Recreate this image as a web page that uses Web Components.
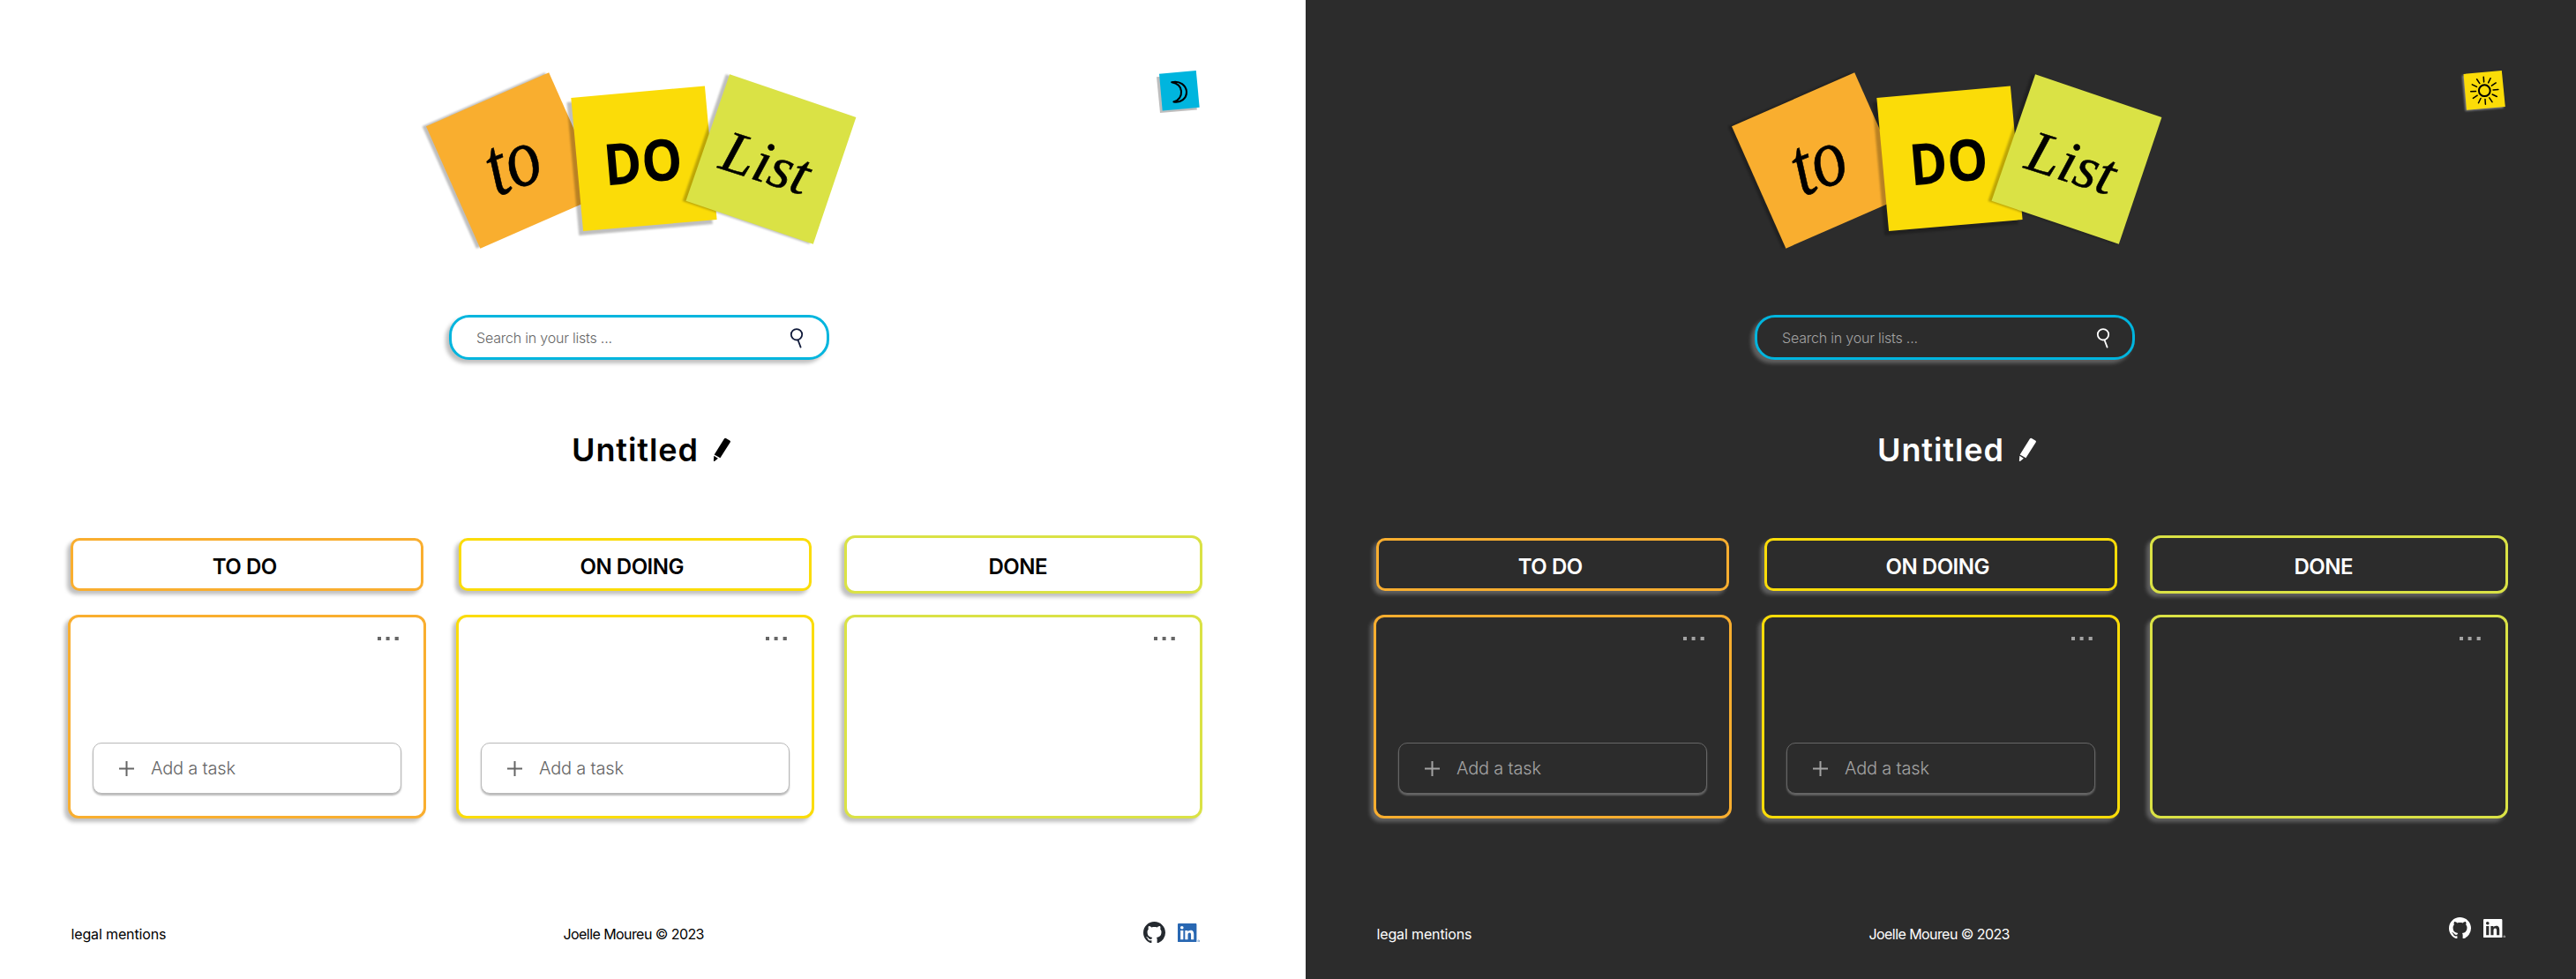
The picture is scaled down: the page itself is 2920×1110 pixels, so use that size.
<!DOCTYPE html>
<html lang="en">
<head>
<meta charset="utf-8">
<title>To Do List</title>
<style>
  html, body { margin: 0; }
  body { display: flex; width: 2920px; height: 1110px; overflow: hidden; font-family: Inter, "Open Sans", sans-serif; }
</style>
</head>
<body>
<todo-page theme="light"></todo-page>
<todo-page theme="dark"></todo-page>

<script>
class Base extends HTMLElement {
  constructor() {
    super();
    this.attachShadow({ mode: 'open' });
  }
  connectedCallback() {
    if (!this.shadowRoot.childNodes.length) this.shadowRoot.innerHTML = this.view();
  }
}

/* One line of text spaced out to an exact width. */
class FitText extends Base {
  view() { return `<style>:host{display:inline-block;white-space:nowrap;line-height:1}</style><slot></slot>`; }
  connectedCallback() {
    super.connectedCallback();
    const target = parseFloat(this.getAttribute('width'));
    const n = this.textContent.length;
    this.style.letterSpacing = '0px';
    const natural = this.getBoundingClientRect().width;
    const gap = (target - natural) / (n - 1);
    this.style.letterSpacing = gap.toFixed(3) + 'px';
    this.style.marginRight = (-gap).toFixed(3) + 'px';
  }
}

class TodoLogo extends Base {
  view() {
    return `<style>
      :host{display:block;width:540px;height:240px}
      svg{display:block}
      .shade{fill:#000;opacity:.25;filter:blur(.8px)}
      .script{font-family:"Liberation Serif",serif;font-style:italic}
      .bold{font-family:"Open Sans",sans-serif;font-weight:700}
    </style>
    <svg width="540" height="240" viewBox="0 0 540 240">
      <polygon class="shade" points="18.6,83.3 157.8,22.3 219.2,160.7 80,221.7"/>
      <polygon fill="#f9ae2f" points="23,83.3 162.2,22.3 223.6,160.7 84.4,221.7"/>
      <polygon class="shade" points="182.5,56 334.1,42.5 347.8,194 196.3,207"/>
      <polygon fill="#fbdc08" points="187.3,51 338.9,37.5 352.6,189 201.1,202"/>
      <polygon class="shade" points="362.7,24.3 506,73 457.4,216.7 313.6,167.9"/>
      <polygon fill="#dae245" points="367.1,24.3 510.4,73 461.8,216.7 317.5,167.7"/>
      <text class="script" font-size="94" stroke="#000" stroke-width=".6" textLength="61" lengthAdjust="spacingAndGlyphs" transform="translate(103 163) rotate(-21)">to</text>
      <text class="bold" font-size="65" textLength="89" lengthAdjust="spacingAndGlyphs" transform="translate(226.5 150.5) rotate(-5)">DO</text>
      <text class="script" font-size="67" stroke="#000" stroke-width=".5" textLength="102" lengthAdjust="spacingAndGlyphs" transform="translate(353 130) rotate(18)">List</text>
    </svg>`;
  }
}

class ThemeToggle extends Base {
  view() {
    const dark = this.getAttribute('theme') === 'dark';
    const rays = Array.from({ length: 12 }, (_, i) =>
      `<line x1="9.8" x2="15.6" transform="rotate(${i * 30 - 4})"/>`).join('');
    return `<style>:host{display:block}svg{display:block}.b{filter:blur(1px)}</style>
    <svg width="80" height="70" viewBox="0 0 80 70">${dark ? `
      <polygon class="b" fill="#fff" opacity=".4" points="10.8,15.5 54,12 57.8,52.5 14.6,56"/>
      <polygon fill="#fbdc08" points="12.5,14 55.8,10 59.8,51 16,54.8"/>
      <g transform="translate(36.3 32.7)" fill="none" stroke="#000" stroke-width="1.5" stroke-linecap="round">
        <circle r="6.4" stroke-width="2"/>${rays}</g>` : `
      <polygon class="b" style="filter:blur(.7px)" opacity=".25" points="11,17.2 53,13.5 56.9,54.5 15,58"/>
      <polygon fill="#00b5de" points="14,13.7 55.8,10 59.7,51.7 17.7,55.5"/>
      <path d="M28.2 23.2C37.5 21 44.5 27 45 34C45.2 41.5 38.5 47 30.4 45.4C36 43.8 39.5 39.3 39 33.4C38.6 28 34.3 24.3 28.2 23.2Z" fill="none" stroke="#000" stroke-width="2.1" stroke-linejoin="round"/>`}
    </svg>`;
  }
}

class SearchBar extends Base {
  view() {
    return `<style>
      :host{display:flex;align-items:center;justify-content:space-between;box-sizing:border-box;width:431px;height:51px;
        border:3px solid #00b5de;border-radius:23px;padding:1px 24px 0 28px;
        background:var(--bg);box-shadow:-4px 4px 4px var(--shadow);color:var(--muted);font-size:16px;font-weight:300}
      svg{display:block;color:var(--lens);margin-left:auto;margin-right:var(--lens-gap)}
    </style>
    <fit-text width="154">Search in your lists ...</fit-text>
    <svg width="18" height="26" viewBox="0 0 18 26" fill="none" stroke="currentColor" stroke-width="1.8" stroke-linecap="round">
      <circle cx="8" cy="9.3" r="6.2"/><path d="M9.7 16L12.6 23.6"/>
    </svg>`;
  }
}

class ListTitle extends Base {
  view() {
    return `<style>
      :host{display:flex;align-items:flex-start;color:var(--ink);font-size:36px;font-weight:600}
      svg{display:block;margin:2px 0 0 14px}
    </style>
    <fit-text width="143">${this.textContent}</fit-text>
    <svg width="26" height="32" viewBox="0 0 26 32" fill="currentColor">
      <path d="M15.9 3.5Q16.7 2.2 18 2.9L22.2 5.4Q23.4 6.2 22.7 7.4L11.4 25.3L4.7 21.4Z"/>
      <path d="M4.3 22.7L8.9 25.7L4.9 28.9Q3.8 29.4 3.9 28.2Z"/>
    </svg>`;
  }
}

class AddTask extends Base {
  view() {
    return `<style>
      :host{display:flex;align-items:center;box-sizing:border-box;width:350px;height:58px;border:1px solid var(--line);
        border-radius:10px;padding:0 29px;background:var(--bg);box-shadow:0 2px 2px var(--shadow2);color:var(--muted);font-size:20px;font-weight:300}
      svg{display:block;margin-right:19px}
    </style>
    <svg width="17" height="17" viewBox="0 0 17 17" stroke="currentColor" stroke-width="2"><path d="M8.5 0V17M0 8.5H17"/></svg>
    <fit-text width="96">Add a task</fit-text>`;
  }
}

class TaskColumn extends Base {
  view() {
    const open = this.hasAttribute('adding');
    return `<style>
      :host{display:flex;flex-direction:column;width:406px;gap:24px}
      .head,.card{box-sizing:border-box;border:3px solid var(--accent);background:var(--bg);box-shadow:-4px 4px 4px var(--shadow)}
      .head{display:flex;align-items:center;justify-content:center;height:66px;border-radius:12px;
        padding:6px var(--nudge) 0 0;color:var(--ink);font-size:24px;font-weight:600}
      :host([inset]) .head{height:60px;margin:3px;border-radius:10px}
      .card{display:flex;flex-direction:column;justify-content:space-between;height:231px;border-radius:12px;padding:22px 25px 25px}
      .dots{display:block;margin-left:auto;margin-right:3px;color:var(--muted)}
    </style>
    <div class="head"><fit-text width="${this.getAttribute('text-width')}">${this.getAttribute('name')}</fit-text></div>
    <div class="card">
      <svg class="dots" width="24" height="4" viewBox="0 0 24 4" fill="currentColor"><path d="M0 0h4v4H0zM9.6 0h4v4h-4zM19.6 0h4.2v4h-4.2z"/></svg>
      ${open ? '<add-task></add-task>' : ''}
    </div>`;
  }
}

class PageFooter extends Base {
  view() {
    return `<style>
      :host{display:flex;align-items:flex-start;color:var(--ink);font-size:16px;font-weight:400}
      .mid{margin-left:450px}
      .icons{display:flex;gap:13.5px;margin-left:498px;margin-top:var(--icon-top)}
      svg{display:block}
      .in{margin-top:2px}
    </style>
    <fit-text width="108">legal mentions</fit-text>
    <fit-text class="mid" width="160">Joelle Moureu © 2023</fit-text>
    <div class="icons">
      <svg width="25" height="24.4" viewBox="0 0 16 15.7" preserveAspectRatio="none" fill="var(--git)"><path d="M8 0C3.58 0 0 3.58 0 8c0 3.54 2.29 6.53 5.47 7.59.4.07.55-.17.55-.38 0-.19-.01-.82-.01-1.49-2.01.37-2.53-.49-2.69-.94-.09-.23-.48-.94-.82-1.13-.28-.15-.68-.52-.01-.53.63-.01 1.08.58 1.23.82.72 1.21 1.87.87 2.33.66.07-.52.28-.87.51-1.07-1.78-.2-3.64-.89-3.64-3.95 0-.87.31-1.59.82-2.15-.08-.2-.36-1.02.08-2.12 0 0 .67-.21 2.2.82.64-.18 1.32-.27 2-.27.68 0 1.36.09 2 .27 1.53-1.04 2.2-.82 2.2-.82.44 1.1.16 1.92.08 2.12.51.56.82 1.27.82 2.15 0 3.07-1.87 3.75-3.65 3.95.29.25.54.73.54 1.48 0 1.07-.01 1.93-.01 2.2 0 .21.15.46.55.38A8.013 8.013 0 0016 8c0-4.42-3.58-8-8-8z"/></svg>
      <svg class="in" width="28" height="21.4" viewBox="0 0 31.4 24" fill="var(--linked)"><path d="M20.447 20.452h-3.554v-5.569c0-1.328-.027-3.037-1.852-3.037-1.853 0-2.136 1.445-2.136 2.939v5.667H9.351V9h3.414v1.561h.046c.477-.9 1.637-1.85 3.37-1.85 3.601 0 4.267 2.37 4.267 5.455v6.286zM5.337 7.433a2.062 2.062 0 0 1-2.063-2.065 2.064 2.064 0 1 1 2.063 2.065zm1.782 13.019H3.555V9h3.564v11.452zM22.6 0H1.4C.6 0 0 .6 0 1.3v21.4C0 23.4.6 24 1.4 24h21.2c.8 0 1.4-.6 1.4-1.3V1.3C24 .6 23.4 0 22.6 0z"/><circle cx="26.6" cy="22.4" r="1.1" fill="none" stroke="var(--linked)" stroke-width=".6"/></svg>
    </div>`;
  }
}

class TodoPage extends Base {
  view() {
    const theme = this.getAttribute('theme');
    return `<style>
      :host{display:flex;flex-direction:column;box-sizing:border-box;flex:none;width:1480px;height:1110px;background:var(--bg);
        --bg:#fff;--ink:#000;--muted:#666;--shadow:rgba(0,0,0,.25);--shadow2:rgba(0,0,0,.27);--line:#b8b8b8;--lens:#101a3a;--lens-gap:0px;
        --git:#24292f;--linked:#2867b2;--icon-top:-6px}
      :host([theme=dark]){width:1440px;--bg:#2c2c2c;--ink:#fff;--muted:#a3a3a3;--shadow:rgba(255,255,255,.25);--shadow2:rgba(255,255,255,.27);
        --line:#666;--lens:#fff;--lens-gap:-1px;--git:#fff;--linked:#fff;--icon-top:-11px}
      header{display:flex;align-items:flex-start;height:297px;box-sizing:border-box;padding:60px 0 0 460px}
      theme-toggle{margin:10px 0 0 300px}
      search-bar{margin:60px 0 0 509px}
      list-title{margin:84px 0 0 648px;height:32px}
      main{display:flex;gap:34px;margin:83px 0 0 77px}
      page-footer{margin:123px 0 0 80.5px}
    </style>
    <header><todo-logo></todo-logo><theme-toggle theme="${theme}"></theme-toggle></header>
    <search-bar></search-bar>
    <list-title>Untitled</list-title>
    <main>
      <task-column inset adding name="TO DO" text-width="73.5" style="--accent:#f9ae2f;--nudge:5px"></task-column>
      <task-column inset adding name="ON DOING" text-width="118" style="--accent:#fbdc08;--nudge:7px"></task-column>
      <task-column name="DONE" text-width="67" style="--accent:#dae245;--nudge:12px"></task-column>
    </main>
    <page-footer></page-footer>`;
  }
}

customElements.define('todo-logo', TodoLogo);
customElements.define('theme-toggle', ThemeToggle);
customElements.define('search-bar', SearchBar);
customElements.define('list-title', ListTitle);
customElements.define('add-task', AddTask);
customElements.define('task-column', TaskColumn);
customElements.define('page-footer', PageFooter);
customElements.define('todo-page', TodoPage);
customElements.define('fit-text', FitText);
</script>
</body>
</html>
